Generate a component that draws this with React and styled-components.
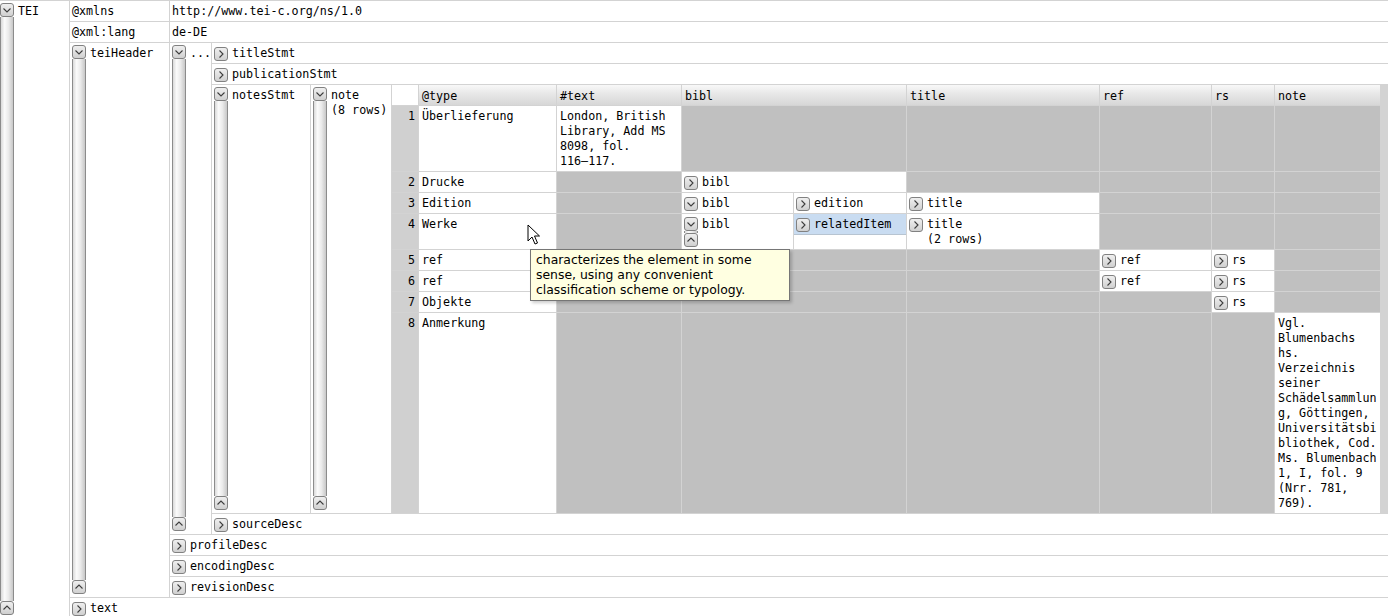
import React from "react";
import styled, { createGlobalStyle } from "styled-components";

const LINE = "#d3d3d3";

const GlobalStyle = createGlobalStyle`
  html, body { margin: 0; padding: 0; background: #fff; }
  body {
    font-family: "DejaVu Sans Mono", "Liberation Mono", monospace;
    font-size: 11.7px;
    line-height: 15px;
    color: #000;
  }
`;

const Page = styled.div`
  position: relative;
  width: 1388px;
  height: 616px;
  overflow: hidden;
  box-sizing: border-box;
  padding-top: 1px;
  background: ${LINE};
`;

// tree layout: a row is name cell + content, rows are stacked with 1px grid lines
const Row = styled.div`
  display: flex;
  gap: 1px;
  background: ${LINE};
`;

const Rows = styled.div`
  flex: 1;
  min-width: 0;
  display: flex;
  flex-direction: column;
  gap: 1px;
  background: ${LINE};
`;

const Cell = styled.div`
  box-sizing: border-box;
  background: #fff;
  display: flex;
  align-items: flex-start;
  padding: 3px 2px 2px;
  min-height: 20px;
  white-space: pre;
  overflow: hidden;
  ${(p) => (p.$w ? `width: ${p.$w}px; flex: none;` : "flex: 1; min-width: 0;")}
`;

const OpenName = styled.div`
  box-sizing: border-box;
  width: ${(p) => p.$w}px;
  flex: none;
  background: #fff;
  display: flex;
  padding: 2px 2px 3px ${(p) => p.$pl ?? 2}px;
  white-space: pre;
  overflow: hidden;
`;

const Label = styled.span`
  margin-left: 4px;
  margin-top: ${(p) => (p.$open ? 1 : 0)}px;
`;

const Toggle = styled.span`
  box-sizing: border-box;
  width: 14px;
  height: 14px;
  flex: none;
  border: 1px solid #818181;
  border-radius: 3px;
  background: linear-gradient(#efefef, #d0d0d0);
  display: flex;
  align-items: center;
  justify-content: center;
  margin-top: ${(p) => p.$mt ?? 0}px;
`;

const Bar = styled.div`
  width: 14px;
  flex: none;
  align-self: stretch;
  display: flex;
  flex-direction: column;
`;

const Track = styled.div`
  flex: 1;
  min-height: 0;
  border-left: 1px solid #8c8c8c;
  border-right: 1px solid #8c8c8c;
  background: linear-gradient(to right, #dadada, #fbfbfb 30%, #ebebeb 62%, #c8c8c8);
`;

// nested table of the note rows
const Grid = styled.div`
  flex: 1;
  min-width: 0;
  display: grid;
  grid-template-columns: 26px 137px 124px 111px 112px 192px 111px 62px 1fr;
  grid-template-rows: 20px 65px 20px 20px 35px 20px 20px 20px 200px;
  gap: 1px;
  background: ${LINE};
`;

const tones = {
  white: "#fff",
  empty: "#c0c0c0",
  num: "#d0d0d0",
  pick: "#c9dcf1",
};

const TCell = styled.div`
  grid-column: span ${(p) => p.$span || 1};
  box-sizing: border-box;
  overflow: hidden;
  white-space: pre;
  display: flex;
  align-items: flex-start;
  padding: 3px ${(p) => (p.$tight ? 2 : 3)}px 2px;
  background: ${(p) => tones[p.$tone || "white"]};
`;

const Num = styled(TCell)`
  justify-content: flex-end;
  background: ${tones.num};
`;

const Head = styled.div`
  grid-column: span ${(p) => p.$span || 1};
  padding: 4px 3px 1px;
  white-space: pre;
  overflow: hidden;
  background: ${(p) =>
    p.$blank ? "#fff" : "linear-gradient(#f8f8f8, #e7e7e7 45%, #d7d7d7)"};
`;

const PickCell = styled.div`
  display: flex;
  flex-direction: column;
  background: #fff;
  overflow: hidden;
`;

const Picked = styled.div`
  height: 21px;
  box-sizing: border-box;
  display: flex;
  align-items: flex-start;
  padding: 3px 2px 2px;
  background: ${tones.pick};
  border-bottom: 1px solid #b7c4d1;
  white-space: pre;
`;

const Tip = styled.div`
  position: absolute;
  left: 530px;
  top: 249px;
  width: 260px;
  height: 52px;
  box-sizing: border-box;
  border: 1px solid #767676;
  background: #ffffe1;
  padding: 2px 5px 0;
  font-family: "DejaVu Sans", "Liberation Sans", sans-serif;
  font-size: 12.4px;
  line-height: 15px;
  white-space: pre;
  box-shadow: 2px 2px 3px rgba(0, 0, 0, 0.2);
`;

const Pointer = styled.svg`
  position: absolute;
  left: 527px;
  top: 224px;
`;

const Chevron = ({ dir }) => {
  const pts = {
    down: "2.5,4.5 6,8 9.5,4.5",
    right: "4.5,2.5 8,6 4.5,9.5",
    up: "2.5,7.5 6,4 9.5,7.5",
  }[dir];
  return (
    <svg width="12" height="12" viewBox="0 0 12 12">
      <polyline points={pts} fill="none" stroke="#3c3c3c" strokeWidth="1.1" />
    </svg>
  );
};

const Expander = () => (
  <Bar>
    <Toggle>
      <Chevron dir="down" />
    </Toggle>
    <Track />
    <Toggle>
      <Chevron dir="up" />
    </Toggle>
  </Bar>
);

const Closed = ({ label, w }) => (
  <Cell $w={w}>
    <Toggle $mt={1}>
      <Chevron dir="right" />
    </Toggle>
    <Label>{label}</Label>
  </Cell>
);

const Open = ({ label, w, pl, children }) => (
  <Row>
    <OpenName $w={w} $pl={pl}>
      <Expander />
      <Label $open>{label}</Label>
    </OpenName>
    {children}
  </Row>
);

const Attr = ({ name, value }) => (
  <Row>
    <Cell $w={99}>{name}</Cell>
    <Cell>{value}</Cell>
  </Row>
);

const Sub = ({ label, dir = "right", span, tone }) => (
  <TCell $tight $span={span} $tone={tone}>
    <Toggle $mt={1}>
      <Chevron dir={dir} />
    </Toggle>
    <Label>{label}</Label>
  </TCell>
);

const Gray = ({ span }) => <TCell $tone="empty" $span={span} />;

const NoteTable = () => (
  <Grid>
    <Head $blank />
    <Head>@type</Head>
    <Head>#text</Head>
    <Head $span={2}>bibl</Head>
    <Head>title</Head>
    <Head>ref</Head>
    <Head>rs</Head>
    <Head>note</Head>

    <Num>1</Num>
    <TCell>Überlieferung</TCell>
    <TCell>{"London, British\nLibrary, Add MS\n8098, fol.\n116–117."}</TCell>
    <Gray span={2} />
    <Gray />
    <Gray />
    <Gray />
    <Gray />

    <Num>2</Num>
    <TCell>Drucke</TCell>
    <Gray />
    <Sub label="bibl" span={2} />
    <Gray />
    <Gray />
    <Gray />
    <Gray />

    <Num>3</Num>
    <TCell>Edition</TCell>
    <Gray />
    <Sub label="bibl" dir="down" />
    <Sub label="edition" />
    <Sub label="title" />
    <Gray />
    <Gray />
    <Gray />

    <Num>4</Num>
    <TCell>Werke</TCell>
    <Gray />
    <TCell $tight>
      <Expander />
      <Label>bibl</Label>
    </TCell>
    <PickCell>
      <Picked>
        <Toggle $mt={1}>
          <Chevron dir="right" />
        </Toggle>
        <Label>relatedItem</Label>
      </Picked>
    </PickCell>
    <Sub label={"title\n(2 rows)"} />
    <Gray />
    <Gray />
    <Gray />

    <Num>5</Num>
    <TCell>ref</TCell>
    <Gray />
    <Gray span={2} />
    <Gray />
    <Sub label="ref" />
    <Sub label="rs" />
    <Gray />

    <Num>6</Num>
    <TCell>ref</TCell>
    <Gray />
    <Gray span={2} />
    <Gray />
    <Sub label="ref" />
    <Sub label="rs" />
    <Gray />

    <Num>7</Num>
    <TCell>Objekte</TCell>
    <Gray />
    <Gray span={2} />
    <Gray />
    <Gray />
    <Sub label="rs" />
    <Gray />

    <Num>8</Num>
    <TCell>Anmerkung</TCell>
    <Gray />
    <Gray span={2} />
    <Gray />
    <Gray />
    <Gray />
    <TCell>
      {
        "Vgl.\nBlumenbachs\nhs.\nVerzeichnis\nseiner\nSchädelsammlun\ng, Göttingen,\nUniversitätsbi\nbliothek, Cod.\nMs. Blumenbach\n1, I, fol. 9\n(Nrr. 781,\n769)."
      }
    </TCell>
  </Grid>
);

export default function App() {
  return (
    <>
      <GlobalStyle />
      <Page>
        <Open label="TEI" w={69} pl={0}>
          <Rows>
            <Attr name="@xmlns" value="http://www.tei-c.org/ns/1.0" />
            <Attr name="@xml:lang" value="de-DE" />
            <Open label="teiHeader" w={99}>
              <Rows>
                <Open label="..." w={41}>
                  <Rows>
                    <Closed label="titleStmt" />
                    <Closed label="publicationStmt" />
                    <Open label="notesStmt" w={98}>
                      <Open label={"note\n(8 rows)"} w={80}>
                        <NoteTable />
                      </Open>
                    </Open>
                    <Closed label="sourceDesc" />
                  </Rows>
                </Open>
                <Closed label="profileDesc" />
                <Closed label="encodingDesc" />
                <Closed label="revisionDesc" />
              </Rows>
            </Open>
            <Closed label="text" />
          </Rows>
        </Open>
        <Tip>
          {"characterizes the element in some\nsense, using any convenient\nclassification scheme or typology."}
        </Tip>
        <Pointer width="14" height="22" viewBox="0 0 14 22">
          <path
            d="M1 1 L1 17 L5 13 L8 20 L10.5 19 L7.5 12 L12.5 12 Z"
            fill="#fff"
            stroke="#000"
            strokeWidth="1"
          />
        </Pointer>
      </Page>
    </>
  );
}
